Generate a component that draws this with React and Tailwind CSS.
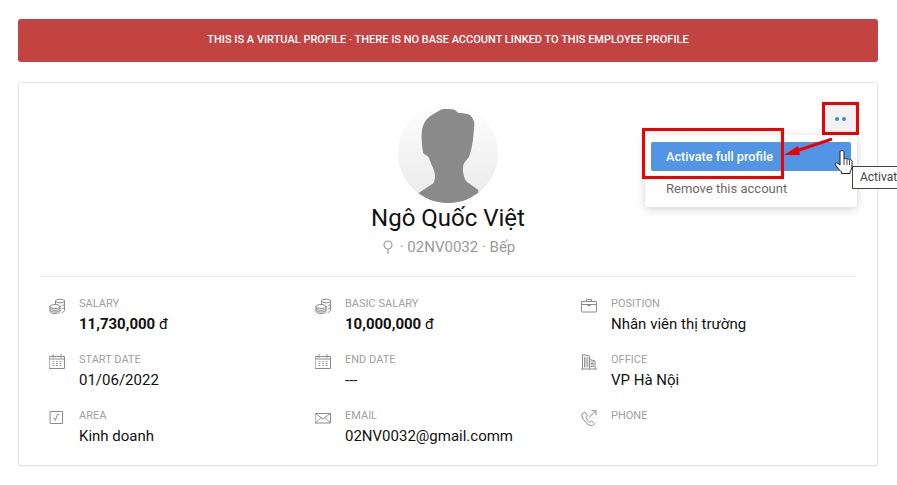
import React from "react";

const S = { width: 16, height: 16, viewBox: "0 0 16 16", fill: "none", stroke: "#8c8c8c", strokeWidth: 1, strokeLinecap: "round", strokeLinejoin: "round" };

const Coins = () => (
  <svg {...S}>
    <ellipse cx="11" cy="3" rx="4.500" ry="1.800" />
    <path d="M6.500 3v3.500M15.500 3v9.500c0 .8-1 1.500-2.500 1.800" />
    <path d="M15.500 6c0 .8-1 1.500-2.500 1.800M15.500 9c0 .8-1 1.500-2.500 1.800" />
    <ellipse cx="6" cy="8.500" rx="5" ry="2" />
    <path d="M1 8.500v5c0 1.100 2.200 2 5 2s5-.9 5-2v-5" />
    <path d="M1 10.300c0 1.100 2.200 2 5 2s5-.9 5-2M1 12c0 1.100 2.200 2 5 2s5-.9 5-2" />
  </svg>
);
const Calendar = () => (
  <svg {...S}>
    <rect x="0.500" y="2.500" width="15" height="12" />
    <path d="M.5 5h15M4 .5V3.500M12 .5V3.500" />
    <path d="M4 7.500h1M7.500 7.500h1M11 7.500h1M4 9.500h1M7.500 9.500h1M11 9.500h1M4 11.500h1M7.500 11.500h1M11 11.500h1" stroke="#999" />
  </svg>
);
const Area = () => (
  <svg {...S}>
    <rect x="1.500" y="1.500" width="12" height="12" />
    <path d="M5 8l1.300 2.500 2.200-6h1.500" />
  </svg>
);
const Mail = () => (
  <svg {...S}>
    <rect x="0.500" y="3.500" width="15" height="9.500" />
    <path d="M.5 3.500L8 9l7.500-5.500M.5 13l5.500-5.500M15.500 13L10 7.500" />
  </svg>
);
const Case = () => (
  <svg {...S}>
    <rect x="0.500" y="3.500" width="15" height="10.500" rx="0.500" />
    <path d="M.5 6.500h15M5.500 3.500V1.500h5v2M6.500 6.500v1h3v-1" />
  </svg>
);
const Office = () => (
  <svg {...S}>
    <path d="M0 15h16M1.500 15V.5L8.500 2v13M8.500 5.500l5.500 1.500v8" />
    <path d="M3.500 3.500v9.500M5 3.500v9.500M6.800 3.500v9.500M10 8h2.500M10 9.500h2.500M10 11h2.500M10 12.500h2.500" stroke="#9a9a9a" />
  </svg>
);
const Phone = () => (
  <svg {...S}>
    <path d="M3.500 2.500L1 4c-.8 1 .5 4.500 3 7.500s6 4.800 7.500 4.200l2-2-2.800-2.700-1.800 1.200C7.500 11.500 5.500 9 5 7.300L6.300 5.800z" />
    <path d="M8.500 7L15 .8M11 .8h4v4" />
  </svg>
);

const Info = ({ icon, label, value, unit }) => (
  <div className="flex h-[56px] w-[266px]">
    <div className="w-[31px] pl-[1px] pt-[2px]">{icon}</div>
    <div className="flex flex-col">
      <span className="text-[11px] leading-[16px] text-[#a0a0a0]">{label}</span>
      {unit ? (
        <span className="mt-[1px] text-[15px] leading-[22px] text-[#111]">
          <span className="font-bold">{value}</span> {unit}
        </span>
      ) : (
        <span className="mt-[1px] text-[15px] leading-[22px] text-[#111]">{value}</span>
      )}
    </div>
  </div>
);

export default function App() {
  return (
    <div className="h-[485px] w-[897px] overflow-hidden bg-white px-[18px] pt-[19px] font-['Roboto',sans-serif]">
      <div className="flex h-[43px] w-[860px] items-center justify-center rounded-[3px] bg-[#c34343] text-[11px] font-medium text-white">
        THIS IS A VIRTUAL PROFILE · THERE IS NO BASE ACCOUNT LINKED TO THIS EMPLOYEE PROFILE
      </div>

      <div className="relative mt-[20px] h-[384px] w-[860px] rounded-[3px] border border-[#e4e4e4] shadow-[0_1px_2px_rgba(0,0,0,0.05)]">
        <div className="flex flex-col items-center pt-[20px]">
          <div className="h-[100px] w-[100px] overflow-hidden rounded-full bg-gradient-to-b from-white to-[#e9e9e9]">
            <svg width="100" height="100" viewBox="0 0 100 100">
              <path
                d="M43.700 6.300 C48 5.800 54 6 57 7 L60 9.700 C64 10 69 10.500 72 12 C75 15 76.500 18 76.300 22 L75.300 33.700 C74.500 42 73 48 71 53.700 C69 57 66 59 65.300 62 C64.800 66 64.800 68 65.300 70.300 C65.800 74 67 76.500 68.700 78.700 L80.300 87 L80 100 L20 100 L20.300 90.300 L35.300 80.300 C36.500 78 37.200 75 37 72 C36.800 68 35 65 33.700 62 C32.500 59 31.500 56 30.300 53.700 L25.300 50.300 C24 44 23.300 36 23.700 30.300 C24 25 25 22 27 18.700 C29 15.500 31 14 33.700 12 Z"
                fill="#8a8a8a"
              />
            </svg>
          </div>
          <div className="-mt-[1px] text-[24px] leading-[32px] text-[#111]">Ngô Quốc Việt</div>
          <div className="mt-[3px] flex items-center text-[15px] leading-[20px] text-[#9a9a9a]">
            <svg width="14" height="16" viewBox="0 0 14 16" fill="none" stroke="#9a9a9a" strokeWidth="1.200" className="mr-[5px]">
              <circle cx="7" cy="6" r="4" />
              <path d="M7 10v5" />
            </svg>
            <span>· 02NV0032 · Bếp</span>
          </div>
        </div>

        <div className="mx-[21px] mt-[19px] border-t border-[#ececec]" />

        <div className="grid grid-cols-[266px_266px_266px] pl-[29px] pt-[19px]">
          <Info icon={<Coins />} label="SALARY" value="11,730,000" unit="đ" />
          <Info icon={<Coins />} label="BASIC SALARY" value="10,000,000" unit="đ" />
          <Info icon={<Case />} label="POSITION" value="Nhân viên thị trường" />
          <Info icon={<Calendar />} label="START DATE" value="01/06/2022" />
          <Info icon={<Calendar />} label="END DATE" value="---" />
          <Info icon={<Office />} label="OFFICE" value="VP Hà Nội" />
          <Info icon={<Area />} label="AREA" value="Kinh doanh" />
          <Info icon={<Mail />} label="EMAIL" value="02NV0032@gmail.comm" />
          <Info icon={<Phone />} label="PHONE" value="" />
        </div>

        {/* Dots button */}
        <div className="absolute left-[803px] top-[19px] flex h-[33px] w-[37px] items-center justify-center gap-[3px] border-[3px] border-[#f00000] bg-[#f2f2f2]">
          <span className="h-[4px] w-[4px] rounded-full bg-[#3f87e6]" />
          <span className="h-[4px] w-[4px] rounded-full bg-[#3f87e6]" />
        </div>

        {/* Menu */}
        <div className="absolute left-[626px] top-[52px] h-[72px] w-[212px] rounded-[4px] bg-white px-[6px] pt-[7px] shadow-[0_2px_10px_rgba(0,0,0,0.18)]">
          <div className="flex h-[29px] items-center rounded-[2px] bg-[#5295e4] pl-[15px] text-[12.7px] font-medium text-white">
            Activate full profile
          </div>
          <div className="mt-[10px] pl-[15px] text-[13px] leading-[16px] text-[#6b6b6b]">Remove this account</div>
        </div>

        {/* Annotation box */}
        <div className="absolute left-[623px] top-[45px] h-[51px] w-[142px] border-[3px] border-[#f00000]" />

        {/* Arrow */}
        <svg width="60" height="24" viewBox="0 0 60 24" className="absolute left-[765px] top-[55px]">
          <path d="M48 1 L12 13" stroke="#f00000" strokeWidth="3" />
          <path d="M0 17 L14 8 L16 17 Z" fill="#f00000" />
        </svg>

        {/* Tooltip */}
        <div className="absolute left-[833px] top-[83px] h-[23px] w-[60px] border border-[#444] bg-white pl-[7px] text-[12px] leading-[21px] text-[#444]">
          Activate
        </div>

        {/* Cursor */}
        <svg width="19" height="25" viewBox="0 0 19 25" className="absolute left-[816px] top-[67px]">
          <path
            d="M5 2c0-2 4-2 4 0V9c1-.6 2.200-.6 3 .2 1-.5 2-.2 2.500.5 1-.3 2.500.2 2.500 1.500V16c0 2.500-1 4-2 6v1.500H6.500V22c-1.500-1.500-4-4-6-7-.8-1.500.5-2.800 2-1.800L5 15z"
            fill="#fff"
            stroke="#222"
            strokeWidth="1"
            strokeLinejoin="round"
          />
          <path d="M9 9v6M12 9.500v5.500M14.500 10v5" stroke="#222" strokeWidth="0.800" fill="none" />
        </svg>
      </div>
    </div>
  );
}
